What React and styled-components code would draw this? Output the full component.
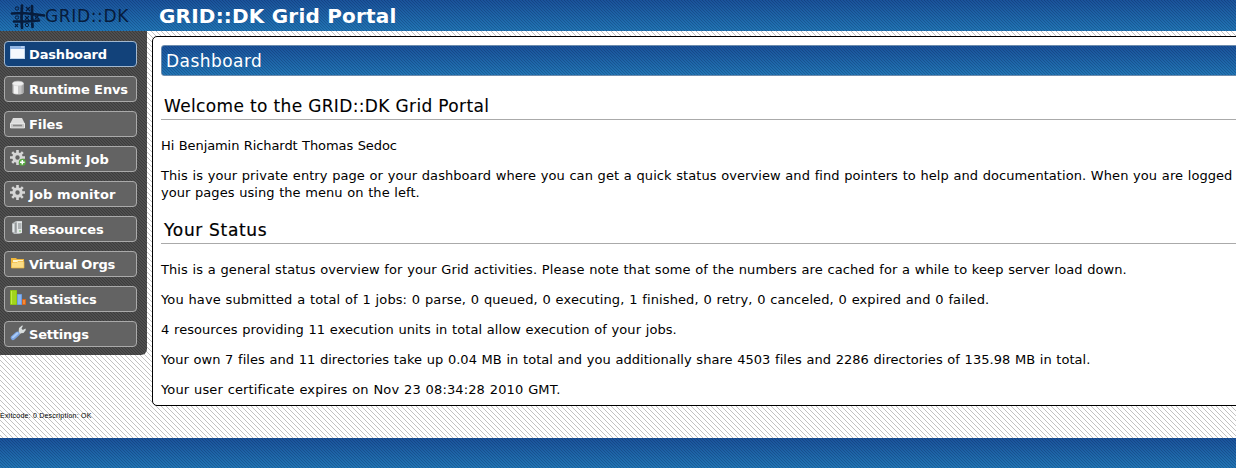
import React from 'react';
import styled, { createGlobalStyle } from 'styled-components';

const GlobalStyle = createGlobalStyle`
  * { box-sizing: border-box; }
  html, body { margin: 0; padding: 0; overflow: hidden; }
  body { font-family: "DejaVu Sans", Verdana, sans-serif; font-size: 13px; color: #000; }
`;

const blue = `
  background:
    linear-gradient(45deg, transparent 43%, rgba(0,20,60,.22) 43% 57%, transparent 57%) 0 0 / 3px 3px,
    linear-gradient(#1a529a, #2175b4);
`;

const Page = styled.div`
  display: flex;
  flex-direction: column;
  width: 1236px;
  height: 468px;
  overflow: hidden;
  background: linear-gradient(45deg, #fff 45%, #c2c2c2 45% 55%, #fff 55%) 0 0 / 5px 5px;
`;

const Header = styled.header`
  ${blue}
  display: flex;
  flex: none;
  height: 31px;
`;

const Brand = styled.div`
  display: flex;
  flex: none;
  width: 159px;
  padding-left: 9px;
  color: #071c3c;
  font-size: 17px;
  line-height: 33px;
  letter-spacing: 0.65px;
  svg { flex: none; margin-top: 3px; }
`;

const SiteTitle = styled.h1`
  margin: 0;
  color: #fff;
  font-size: 20px;
  font-weight: bold;
  line-height: 33px;
  letter-spacing: ${p => p.$spacing}px;
  white-space: nowrap;
`;

const Main = styled.div`
  display: flex;
  flex: none;
  align-items: flex-start;
  height: 375px;
`;

const Menu = styled.nav`
  display: flex;
  flex: none;
  flex-direction: column;
  gap: 9px;
  width: 147px;
  height: 324px;
  padding: 10px 10px 0 4px;
  border-bottom-right-radius: 6px;
  background: linear-gradient(45deg, #4e4e4e 43%, #3c3c3c 43% 57%, #4e4e4e 57%) 0 0 / 3px 3px;
`;

const MenuItem = styled.a`
  display: flex;
  align-items: flex-start;
  height: 26px;
  padding-left: 5px;
  border: 1px solid ${p => (p.$active ? '#a3b8cf' : '#aaa')};
  border-radius: 4px;
  background: ${p => (p.$active ? '#12427a' : '#636363')};
  color: #fff;
  font-size: 13px;
  font-weight: bold;
  line-height: 26px;
  letter-spacing: ${p => p.$spacing}px;
  white-space: nowrap;
  svg { flex: none; margin: 3px 3px 0 0; }
`;

const Panel = styled.main`
  flex: none;
  width: 1100px;
  height: 370px;
  margin: 5px 0 0 5px;
  padding: 8px;
  border: 1px solid #000;
  border-radius: 5px;
  background: #fff;
`;

const PanelTitle = styled.div`
  ${blue}
  height: 31px;
  padding-left: 4px;
  border: 1px solid #6c8cae;
  border-radius: 3px;
  color: #fff;
  font-size: 17px;
  line-height: 31px;
  letter-spacing: ${p => p.$spacing}px;
`;

const Heading = styled.h2`
  height: 28px;
  margin: ${p => p.$top}px 0 0;
  padding-left: 3px;
  border-bottom: 1px solid #aaa;
  font-size: 17px;
  font-weight: normal;
  line-height: 28px;
  letter-spacing: ${p => p.$spacing}px;
  -webkit-text-stroke: ${p => p.$stroke || 0}px #000;
`;

const Text = styled.p`
  margin: ${p => p.$top || 13}px 0 0;
  line-height: 17px;
  white-space: nowrap;
`;

const Line = styled.span`
  display: block;
  letter-spacing: ${p => p.$spacing}px;
  word-spacing: 0.5px;
`;

const Status = styled.div`
  height: 32px;
  padding-top: 5px;
  font-family: "Liberation Sans", Arial, sans-serif;
  font-size: 7px;
  line-height: 10px;
  letter-spacing: 0.22px;
  white-space: nowrap;
`;

const Footer = styled.footer`
  ${blue}
  flex: none;
  height: 30px;
`;

const Icon = ({ children }) => <svg width="16" height="16" viewBox="0 0 16 16">{children}</svg>;

const WindowIcon = () => (
  <Icon>
    <rect x=".5" y="1.5" width="14" height="12" fill="#f4f8fd" stroke="#c3d8ef" />
    <rect x="0" y="1" width="15" height="3" fill="#92b6e4" />
    <path d="M11 2h3" stroke="#dbeaff" />
  </Icon>
);
const DatabaseIcon = () => (
  <Icon>
    <path d="M2.5 3.5v9c0 2.7 11 2.7 11 0v-9z" fill="#c8c8c8" />
    <path d="M4 4v9.500l4 .5V4z" fill="#f2f2f2" />
    <path d="M11.500 4v9.500l2-1V4z" fill="#aaa" />
    <ellipse cx="8" cy="3.500" rx="5.500" ry="2.300" fill="#eee" stroke="#d0d0d0" strokeWidth=".6" />
  </Icon>
);
const DriveIcon = () => (
  <Icon>
    <path d="M3 3h9l3 6v4H0V9z" fill="#ddd" />
    <path d="M.5 8.500h14v4.500H.5z" fill="#c6c6c6" stroke="#eee" strokeWidth=".7" />
    <path d="M3 10.500h9" stroke="#888" strokeWidth="1.500" />
  </Icon>
);
const Gear = () => (
  <g>
    <path d="M7.500 0v15M0 7.500h15M2.200 2.200l10.600 10.600M12.800 2.200L2.200 12.800" stroke="#d6d6d6" strokeWidth="2.600" />
    <circle cx="7.500" cy="7.500" r="3.700" fill="#636363" stroke="#d6d6d6" strokeWidth="3" />
  </g>
);
const GearIcon = () => <Icon><Gear /></Icon>;
const GearAddIcon = () => (
  <Icon>
    <Gear />
    <circle cx="12.300" cy="12.300" r="3.500" fill="#56a73f" />
    <path d="M10 12.300h4.600M12.300 10v4.600" stroke="#fff" strokeWidth="1.500" />
  </Icon>
);
const ServerIcon = () => (
  <Icon>
    <path d="M2 3.500L6 1h6v12l-3 1H4l-2-2z" fill="#b7bbbd" />
    <path d="M7 1.500h5v11.500H7z" fill="#e4e7e8" />
    <path d="M8 4h3.500M8 6h3.500M8 8h3.500" stroke="#7a8083" strokeWidth="1" />
    <path d="M3.500 4v8" stroke="#e6eaeb" strokeWidth="1.500" />
    <path d="M5.800 3v9.500" stroke="#858b8e" strokeWidth="1" />
    <path d="M9 11h2" stroke="#74bf68" />
  </Icon>
);
const FolderIcon = () => (
  <Icon>
    <path d="M1 3h5l1 1h7v9H1z" fill="#eeb63c" />
    <path d="M3 5h10v3H3z" fill="#fff4cc" />
    <path d="M1.500 7.500h5.500l1-1h6v6.500H1.500z" fill="#fbdc85" stroke="#efb63b" strokeWidth=".7" />
  </Icon>
);
const ChartIcon = () => (
  <Icon>
    <path d="M.5.5h6v14h-6z" fill="#a2d51c" stroke="#8fc414" />
    <path d="M1.500 1v13" stroke="#c2ec47" />
    <path d="M7.500 4.500h4v10h-4z" fill="#8bb5f0" stroke="#6a9ce0" />
    <path d="M12.500 9.500h3v5h-3z" fill="#f08c3a" stroke="#d9641c" />
  </Icon>
);
const WrenchIcon = () => (
  <Icon>
    <path d="M8.500 8l.500-5L12 .5l1 .3-1.500 2.700 1.300 1.500L15.500 3.500l.3 1.500L13.500 8 11 8.300 9.500 9.500z" fill="#d8dddd" />
    <path d="M7.500 8.800l-4.500 4" stroke="#7ba3e0" strokeWidth="4.500" strokeLinecap="round" />
    <path d="M7.500 8.300l-4.500 4" stroke="#a9cbf8" strokeWidth="2" strokeLinecap="round" />
  </Icon>
);

const GridLogo = () => (
  <svg width="36" height="28" viewBox="0 0 36 28" fill="none" stroke="#071c3c">
    <path d="M3 10.500L14 10 28 11.500 35 12.500M5 18.500h12l13-1M13 2.500l-.500 12L13 25M23 3v10l.500 11" strokeWidth="2.700" strokeLinecap="round" />
    <path d="M17 4l4 4M21 4l-4 4M16 13l4 4M20 13l-4 4M26 13l4 3M30 12l-4 4M6 21l3 3M9 21l-3 3" strokeWidth="1.100" />
    <circle cx="8" cy="5.500" r="1.700" /><circle cx="8" cy="14.500" r="1.700" /><circle cx="18" cy="22" r="1.700" />
  </svg>
);

const menu = [
  ['Dashboard', WindowIcon, -0.15],
  ['Runtime Envs', DatabaseIcon, -0.12],
  ['Files', DriveIcon, -0.1],
  ['Submit Job', GearAddIcon, 0],
  ['Job monitor', GearIcon, 0.1],
  ['Resources', ServerIcon, -0.1],
  ['Virtual Orgs', FolderIcon, -0.2],
  ['Statistics', ChartIcon, -0.12],
  ['Settings', WrenchIcon, -0.2],
];

export default function App() {
  return (
    <Page>
      <GlobalStyle />
      <Header>
        <Brand><GridLogo />GRID::DK</Brand>
        <SiteTitle $spacing={0.2}>GRID::DK Grid Portal</SiteTitle>
      </Header>
      <Main>
        <Menu>
          {menu.map(([label, Glyph, spacing], i) => (
            <MenuItem key={label} $active={i === 0} $spacing={spacing}><Glyph />{label}</MenuItem>
          ))}
        </Menu>
        <Panel>
          <PanelTitle $spacing={0.45}>Dashboard</PanelTitle>
          <Heading $top={16} $spacing={0.35} $stroke={0.1}>Welcome to the GRID::DK Grid Portal</Heading>
          <Text $top={17}><Line $spacing={-0.09}>Hi Benjamin Richardt Thomas Sedoc</Line></Text>
          <Text>
            <Line $spacing={0.056}>This is your private entry page or your dashboard where you can get a quick status overview and find pointers to help and documentation. When you are logged</Line>
            <Line $spacing={0.04}>your pages using the menu on the left.</Line>
          </Text>
          <Heading $top={15} $spacing={0.68} $stroke={0.2}>Your Status</Heading>
          <Text $top={17}><Line $spacing={0.07}>This is a general status overview for your Grid activities. Please note that some of the numbers are cached for a while to keep server load down.</Line></Text>
          <Text><Line $spacing={0.106}>You have submitted a total of 1 jobs: 0 parse, 0 queued, 0 executing, 1 finished, 0 retry, 0 canceled, 0 expired and 0 failed.</Line></Text>
          <Text><Line $spacing={0.063}>4 resources providing 11 execution units in total allow execution of your jobs.</Line></Text>
          <Text><Line $spacing={0.03}>Your own 7 files and 11 directories take up 0.04 MB in total and you additionally share 4503 files and 2286 directories of 135.98 MB in total.</Line></Text>
          <Text><Line $spacing={0.13}>Your user certificate expires on Nov 23 08:34:28 2010 GMT.</Line></Text>
        </Panel>
      </Main>
      <Status>Exitcode: 0 Description: OK</Status>
      <Footer />
    </Page>
  );
}
